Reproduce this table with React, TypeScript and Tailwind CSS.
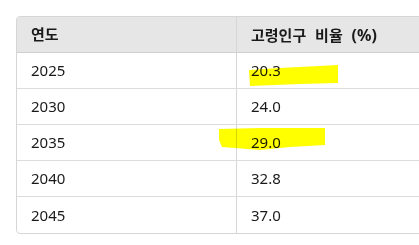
import React from "react";

const rows = [
  ["2025", "20.3"],
  ["2030", "24.0"],
  ["2035", "29.0"],
  ["2040", "32.8"],
  ["2045", "37.0"],
];

export default function App() {
  return (
    <div
      className="relative w-[419px] h-[245px] overflow-hidden bg-white text-[15px] text-[#1a1a1a]"
      style={{ fontFamily: '"Noto Sans", "Noto Sans CJK KR", sans-serif' }}
    >
      <div className="pl-4 pt-4">
        <div className="w-[480px] border border-[#d6d6d6] rounded-tl-[4px] rounded-bl-[4px] overflow-hidden">
          <div className="flex h-[36px] bg-[#e6e6e6] border-b border-[#cfcfcf] font-bold">
            <div className="w-[220px] border-r border-[#d6d6d6] flex items-center pl-[14px]">연도</div>
            <div className="flex-1 flex items-center pl-[14px]">
              <span className="[word-spacing:5px]">
                고령인구 비율 <span className="text-[16px]">(%)</span>
              </span>
            </div>
          </div>
          {rows.map(([y, v], i) => (
            <div
              key={y}
              className={`flex h-[36px] ${i < rows.length - 1 ? "border-b border-[#dcdcdc]" : "h-[35px]"}`}
            >
              <div className="w-[220px] border-r border-[#d6d6d6] flex items-center pl-[14px]">{y}</div>
              <div className="flex-1 flex items-center pl-[14px]">{v}</div>
            </div>
          ))}
        </div>
      </div>
      <svg className="absolute left-0 top-0 mix-blend-multiply" width="419" height="245">
        <path
          d="M249 70 L280 68 L338 65 L338 83 L300 84 L250 86 Z"
          fill="#ffff00"
        />
        <path
          d="M219 129 L260 128 L325 128 L325 145 L290 147 L260 150 L222 147 L219 140 Z"
          fill="#ffff00"
        />
      </svg>
    </div>
  );
}
